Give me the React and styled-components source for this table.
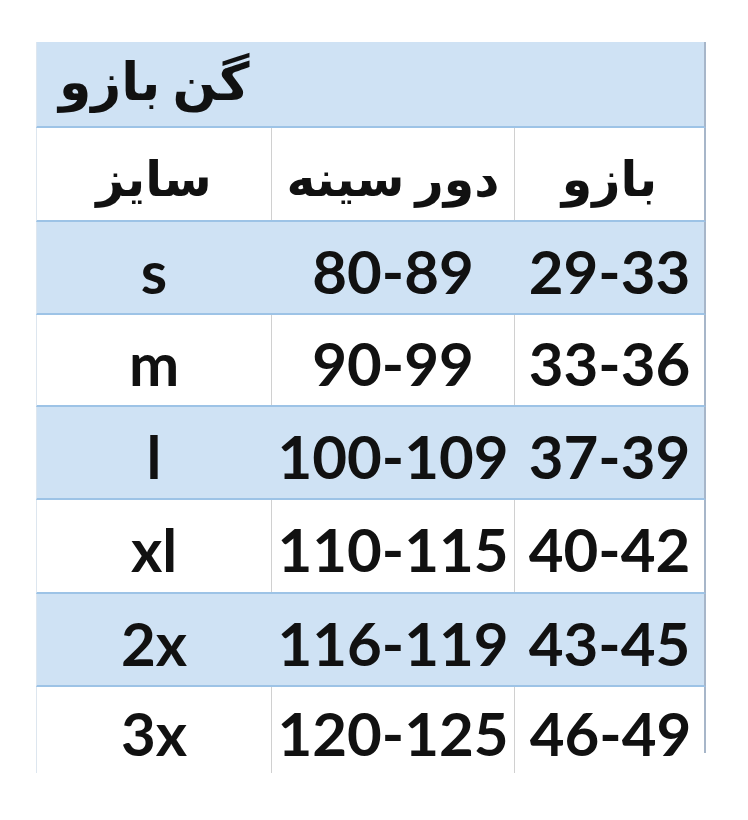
import styled, { createGlobalStyle } from "styled-components";

const GlobalStyle = createGlobalStyle`
  html, body {
    margin: 0;
    padding: 0;
    background: #ffffff;
  }
`;

const Page = styled.main`
  width: 748px;
  height: 820px;
  padding: 42px 0 0 36px;
  box-sizing: border-box;
  background: #ffffff;
  font-family: "Lato", "DejaVu Sans", sans-serif;
  font-weight: 700;
  color: #111111;
`;

const Sheet = styled.section`
  width: 670px;
  display: flex;
  flex-direction: column;
`;

// merged title cell
const TitleRow = styled.div`
  height: 86px;
  box-sizing: border-box;
  background: #cfe2f4;
  border-bottom: 2px solid #9dc3e6;
  border-right: 2px solid #a7b6c9;
  border-left: 1px solid #dde6ef;
  display: flex;
  align-items: center;
  padding: 0 0 4px 22px;
`;

const Title = styled.h1`
  margin: 0;
  font-family: "DejaVu Sans", sans-serif;
  font-size: 52px;
  font-weight: 700;
  line-height: 1;
  word-spacing: -6px;
`;

// one sheet row
const Row = styled.div`
  display: grid;
  grid-template-columns: 235px 243px 1fr;
  height: ${(p) => p.$h}px;
  box-sizing: border-box;
  background: ${(p) =>
    p.$last
      ? "linear-gradient(#a7b6c9, #a7b6c9) right top / 2px 66px no-repeat, #ffffff"
      : p.$blue
      ? "#cfe2f4"
      : "#ffffff"};
  border-bottom: ${(p) => (p.$last ? "none" : "2px solid #9dc3e6")};
  border-right: ${(p) => (p.$last ? "none" : "2px solid #a7b6c9")};
  border-left: 1px solid #dde6ef;
`;

const Cell = styled.div`
  display: flex;
  align-items: center;
  justify-content: center;
  padding-top: ${(p) => (p.$head ? 10 : 6)}px;
  font-size: ${(p) => (p.$head ? 49 : 60)}px;
  font-family: ${(p) =>
    p.$head ? '"DejaVu Sans", sans-serif' : '"Lato", "DejaVu Sans", sans-serif'};
  word-spacing: ${(p) => (p.$head ? "-6px" : "normal")};
  line-height: 1;
  white-space: nowrap;
  border-right: ${(p) =>
    p.$edge ? "none" : p.$blue ? "1px solid transparent" : "1px solid #d0d0d0"};
`;

const sizes = [
  { size: "s", chest: "80-89", arm: "29-33", h: 93 },
  { size: "m", chest: "90-99", arm: "33-36", h: 92 },
  { size: "l", chest: "100-109", arm: "37-39", h: 93 },
  { size: "xl", chest: "110-115", arm: "40-42", h: 94 },
  { size: "2x", chest: "116-119", arm: "43-45", h: 93 },
  { size: "3x", chest: "120-125", arm: "46-49", h: 86 },
];

export default function App() {
  return (
    <>
      <GlobalStyle />
      <Page>
        <Sheet>
          <TitleRow>
            <Title>گن بازو</Title>
          </TitleRow>

          <Row $h={94}>
            <Cell $head>سایز</Cell>
            <Cell $head>دور سینه</Cell>
            <Cell $head $edge>
              بازو
            </Cell>
          </Row>

          {sizes.map((r, i) => {
            const blue = i % 2 === 0;
            const last = i === sizes.length - 1;
            return (
              <Row key={r.size} $h={r.h} $blue={blue} $last={last}>
                <Cell $blue={blue}>{r.size}</Cell>
                <Cell $blue={blue}>{r.chest}</Cell>
                <Cell $blue={blue} $edge>
                  {r.arm}
                </Cell>
              </Row>
            );
          })}
        </Sheet>
      </Page>
    </>
  );
}
